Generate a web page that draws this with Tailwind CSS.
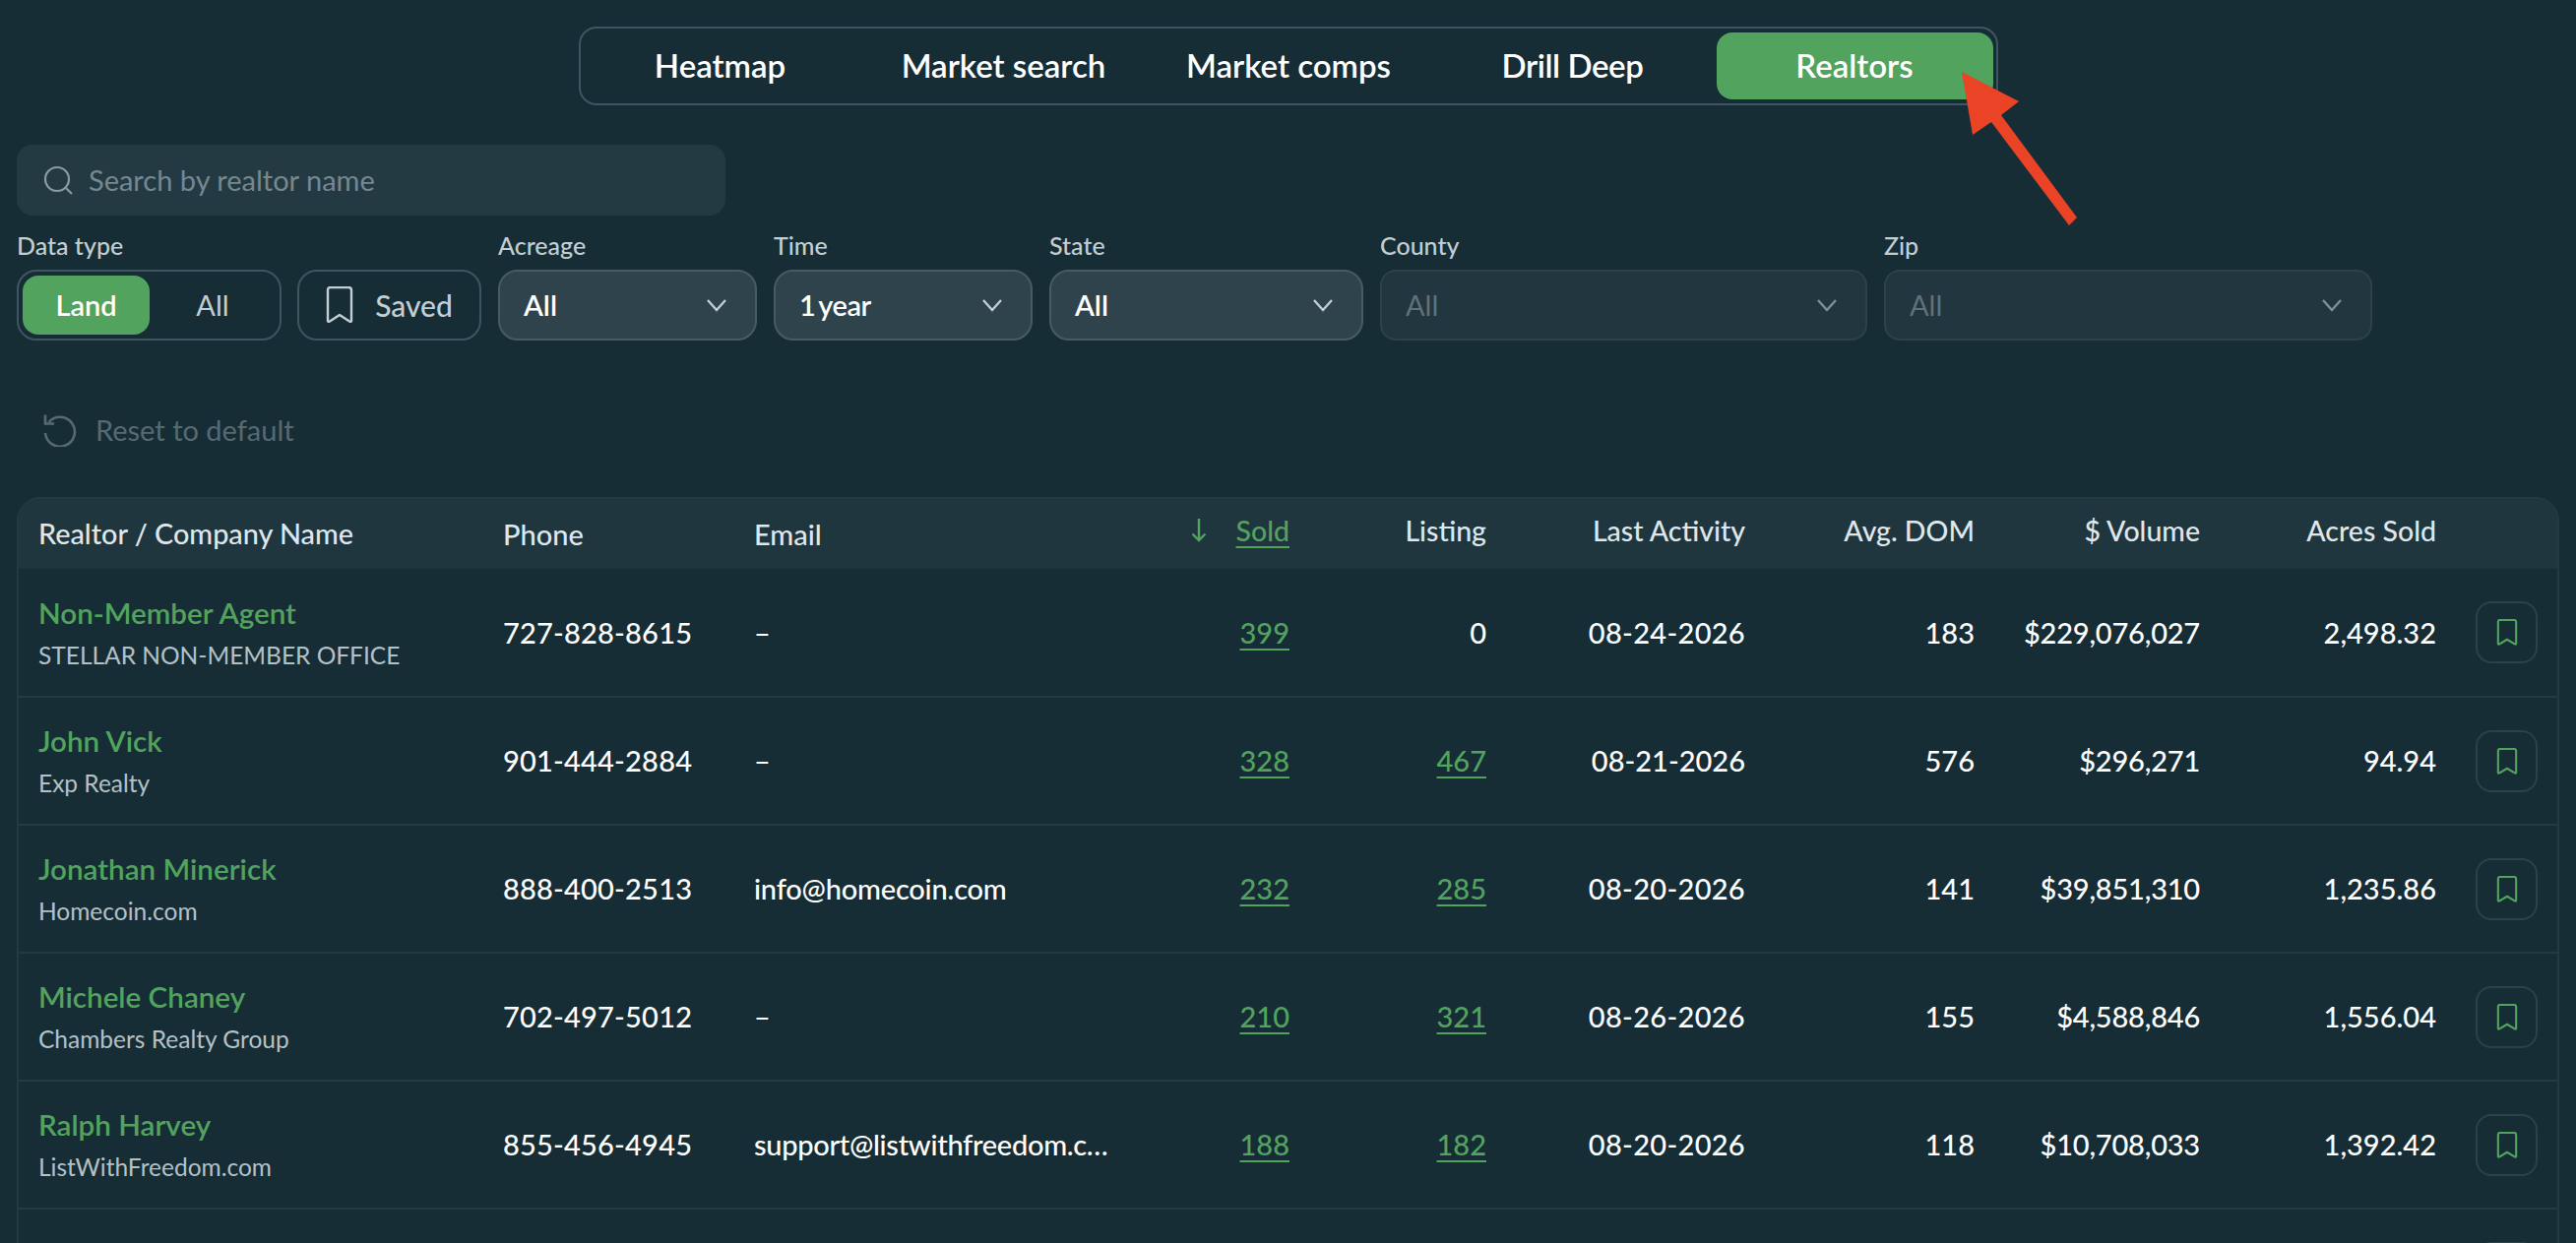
<!DOCTYPE html>
<html lang="en">
  <head>
    <meta charset="UTF-8" />
    <meta name="viewport" content="width=device-width, initial-scale=1.0" />
    <script src="https://cdn.jsdelivr.net/npm/@tailwindcss/browser@4"></script>
    <title>Realtors</title>
  </head>
  <body class="relative h-[1263px] overflow-hidden bg-[#172d36] font-['Lato',sans-serif] text-white">
    <!-- tabs -->
    <div class="flex justify-center pt-[27px]">
      <nav class="flex h-[80px] w-[1442px] items-center rounded-[18px] border-2 border-[#3f5560] pl-[1px] pr-[1px] text-[33px] font-semibold">
        <span class="flex h-[68px] w-[282px] items-center justify-center">Heatmap</span>
        <span class="flex h-[68px] w-[294px] items-center justify-center">Market search</span>
        <span class="flex h-[68px] w-[285px] items-center justify-center">Market comps</span>
        <span class="flex h-[68px] w-[292px] items-center justify-center tracking-[-0.4px]">Drill Deep</span>
        <span class="flex h-[68px] w-[281px] items-center justify-center rounded-[16px] bg-[#52a35e]">Realtors</span>
      </nav>
    </div>

    <!-- search -->
    <div class="ml-[17px] mt-[40px] flex h-[72px] w-[720px] items-center gap-[15px] rounded-[16px] bg-[#243a43] pl-[26px] text-[29px] text-[#75888f]">
      <svg class="h-[32px] w-[32px]" viewBox="0 0 32 32" fill="none" stroke="#8a9ba1" stroke-width="2.2"><circle cx="15" cy="15" r="12"/><path d="M24 24l6 6"/></svg>
      Search by realtor name
    </div>

    <!-- filters -->
    <div class="ml-[17px] mt-[18px] flex items-end gap-[17px]">
      <div class="flex flex-col gap-[13px]">
        <span class="text-[25px] leading-[24px] font-medium text-[#c3ced2]">Data type</span>
        <div class="flex h-[72px] w-[269px] items-center rounded-[20px] border-2 border-[#3f5560] pl-[4px] text-[29px]">
          <span class="flex h-[60px] w-[129px] items-center justify-center rounded-[16px] bg-[#52a35e] font-semibold">Land</span>
          <span class="flex w-[128px] justify-center text-[#c3ced2]">All</span>
        </div>
      </div>
      <div class="-ml-[1px] flex h-[72px] w-[187px] items-center justify-center gap-[22px] rounded-[20px] border-2 border-[#3f5560] text-[30px] font-medium text-[#c3ced2]">
        <svg class="h-[38px] w-[28px]" viewBox="0 0 28 38" fill="none" stroke="#c3ced2" stroke-width="2.4" stroke-linejoin="round"><path d="M2 4q0-3 3-3h18q3 0 3 3v31q0 1.500-2 .5l-10-6.500-10 6.500q-2 1-2-.5z"/></svg>
        Saved
      </div>
      <div class="flex flex-col gap-[13px]">
        <span class="text-[25px] leading-[24px] font-medium text-[#c3ced2]">Acreage</span>
        <div class="flex h-[72px] w-[263px] items-center justify-between rounded-[20px] border-2 border-[#465b64] bg-[#2e434b] pl-[24px] pr-[28px] text-[29px] font-semibold">
          All
          <svg class="h-[14px] w-[22px]" viewBox="0 0 22 14" fill="none" stroke="#c3ced2" stroke-width="2.400"><path d="M2 2l9 10 9-10"/></svg>
        </div>
      </div>
      <div class="flex flex-col gap-[13px]">
        <span class="text-[25px] leading-[24px] font-medium text-[#c3ced2]">Time</span>
        <div class="flex h-[72px] w-[263px] items-center justify-between rounded-[20px] border-2 border-[#465b64] bg-[#2e434b] pl-[24px] pr-[28px] text-[29px] font-semibold tracking-[-0.5px] [word-spacing:-3px]">
          1 year
          <svg class="h-[14px] w-[22px]" viewBox="0 0 22 14" fill="none" stroke="#c3ced2" stroke-width="2.400"><path d="M2 2l9 10 9-10"/></svg>
        </div>
      </div>
      <div class="flex flex-col gap-[13px]">
        <span class="text-[25px] leading-[24px] font-medium text-[#c3ced2]">State</span>
        <div class="flex h-[72px] w-[319px] items-center justify-between rounded-[20px] border-2 border-[#465b64] bg-[#2e434b] pl-[24px] pr-[28px] text-[29px] font-semibold">
          All
          <svg class="h-[14px] w-[22px]" viewBox="0 0 22 14" fill="none" stroke="#c3ced2" stroke-width="2.400"><path d="M2 2l9 10 9-10"/></svg>
        </div>
      </div>
      <div class="flex flex-col gap-[13px]">
        <span class="text-[25px] leading-[24px] font-medium text-[#c3ced2]">County</span>
        <div class="flex h-[72px] w-[495px] items-center justify-between rounded-[16px] border-2 border-[#2c424b] bg-[#21363f] pl-[24px] pr-[28px] text-[29px] text-[#5f727a]">
          All
          <svg class="h-[14px] w-[22px]" viewBox="0 0 22 14" fill="none" stroke="#7d9097" stroke-width="2.400"><path d="M2 2l9 10 9-10"/></svg>
        </div>
      </div>
      <div class="flex flex-col gap-[13px]">
        <span class="text-[25px] leading-[24px] font-medium text-[#c3ced2]">Zip</span>
        <div class="flex h-[72px] w-[496px] items-center justify-between rounded-[16px] border-2 border-[#2c424b] bg-[#21363f] pl-[24px] pr-[28px] text-[29px] text-[#5f727a]">
          All
          <svg class="h-[14px] w-[22px]" viewBox="0 0 22 14" fill="none" stroke="#7d9097" stroke-width="2.400"><path d="M2 2l9 10 9-10"/></svg>
        </div>
      </div>
    </div>

    <!-- reset -->
    <div class="ml-[44px] mt-[74px] flex h-[34px] items-center gap-[19px] text-[29px] text-[#566a72]">
      <svg class="h-[34px] w-[34px]" viewBox="0 0 34 34" fill="none" stroke="#566a72" stroke-width="2.600"><path d="M5.500 9A15 15 0 1 1 2 20"/><path d="M2 1.500v9h9"/></svg>
      Reset to default
    </div>

    <!-- table -->
    <div class="ml-[17px] mt-[51px] w-[2583px] rounded-t-[24px] border-2 border-b-0 border-[#233a43]">
      <table class="w-[2579px] table-fixed border-collapse text-[29px]">
        <colgroup>
          <col class="w-[472px]" /><col class="w-[255px]" /><col class="w-[396px]" /><col class="w-[188px]" /><col class="w-[200px]" /><col class="w-[263px]" /><col class="w-[233px]" /><col class="w-[229px]" /><col class="w-[240px]" /><col class="w-[103px]" />
        </colgroup>
        <thead class="bg-[#20363f] text-[#dfe7ec]">
          <tr class="h-[71px]">
            <th class="rounded-tl-[22px] px-[20px] text-left text-[28.8px] font-medium">Realtor / Company Name</th>
            <th class="px-[20px] text-left font-medium">Phone</th>
            <th class="px-[20px] text-left font-medium">Email</th>
            <th class="px-[20px] pb-[7px] text-right text-[28.5px] font-medium text-[#52a35e]">
              <span class="flex items-center justify-end gap-[30px]">
                <svg class="h-[24px] w-[16px]" viewBox="0 0 16 24" fill="none" stroke="#52a35e" stroke-width="2.400"><path d="M8 0v22M1.500 15.500L8 22l6.500-6.500"/></svg>
                <span class="underline underline-offset-[5px] decoration-2">Sold</span>
              </span>
            </th>
            <th class="px-[20px] pb-[7px] text-right text-[28.5px] font-medium">Listing</th>
            <th class="px-[20px] pb-[7px] text-right text-[28.5px] font-medium">Last Activity</th>
            <th class="px-[20px] pb-[7px] text-right text-[28.5px] font-medium">Avg. DOM</th>
            <th class="px-[20px] pb-[7px] text-right text-[28.5px] font-medium">$ Volume</th>
            <th class="px-[20px] pb-[7px] text-right text-[28.5px] font-medium">Acres Sold</th>
            <th class="rounded-tr-[22px]"></th>
          </tr>
        </thead>
        <tbody class="font-medium">
          <tr class="h-[130px] border-b-2 border-[#233a43]">
            <td class="px-[20px]"><div class="text-[29.6px] font-semibold leading-[38px] text-[#52a35e]">Non-Member Agent</div><div class="mt-[8px] text-[24.5px] font-normal leading-[32px] text-[#b4c1c6]">STELLAR NON-MEMBER OFFICE</div></td>
            <td class="px-[20px] tracking-[0.2px]">727-828-8615</td>
            <td class="px-[20px]">–</td>
            <td class="px-[20px] text-right text-[#52a35e]"><span class="underline underline-offset-[5px] decoration-2">399</span></td>
            <td class="px-[20px] text-right">0</td>
            <td class="px-[20px] text-right tracking-[0.3px]">08-24-2026</td>
            <td class="px-[20px] text-right">183</td>
            <td class="px-[20px] text-right tracking-[-0.2px]">$229,076,027</td>
            <td class="px-[20px] text-right">2,498.32</td>
            <td class="px-[20px]"><span class="flex h-[63px] w-[63px] items-center justify-center rounded-[16px] border-2 border-[#2c424b]"><svg class="h-[27px] w-[22px]" viewBox="0 0 22 28" fill="none" stroke="#52a35e" stroke-width="2.200" stroke-linejoin="round"><path d="M1.500 3q0-2 2-2h15q2 0 2 2v23q0 1-1.500.3l-8-4.800-8 4.800q-1.500.7-1.500-.3z"/></svg></span></td>
          </tr>
          <tr class="h-[130px] border-b-2 border-[#233a43]">
            <td class="px-[20px]"><div class="text-[29.6px] font-semibold leading-[38px] text-[#52a35e]">John Vick</div><div class="mt-[8px] text-[24.5px] font-normal leading-[32px] text-[#b4c1c6]">Exp Realty</div></td>
            <td class="px-[20px] tracking-[0.2px]">901-444-2884</td>
            <td class="px-[20px]">–</td>
            <td class="px-[20px] text-right text-[#52a35e]"><span class="underline underline-offset-[5px] decoration-2">328</span></td>
            <td class="px-[20px] text-right text-[#52a35e]"><span class="underline underline-offset-[5px] decoration-2">467</span></td>
            <td class="px-[20px] text-right">08-21-2026</td>
            <td class="px-[20px] text-right">576</td>
            <td class="px-[20px] text-right tracking-[-0.2px]">$296,271</td>
            <td class="px-[20px] text-right">94.94</td>
            <td class="px-[20px]"><span class="flex h-[63px] w-[63px] items-center justify-center rounded-[16px] border-2 border-[#2c424b]"><svg class="h-[27px] w-[22px]" viewBox="0 0 22 28" fill="none" stroke="#52a35e" stroke-width="2.200" stroke-linejoin="round"><path d="M1.500 3q0-2 2-2h15q2 0 2 2v23q0 1-1.500.3l-8-4.800-8 4.800q-1.500.7-1.500-.3z"/></svg></span></td>
          </tr>
          <tr class="h-[130px] border-b-2 border-[#233a43]">
            <td class="px-[20px]"><div class="text-[29.6px] font-semibold leading-[38px] text-[#52a35e]">Jonathan Minerick</div><div class="mt-[8px] text-[24.5px] font-normal leading-[32px] text-[#b4c1c6]">Homecoin.com</div></td>
            <td class="px-[20px] tracking-[0.2px]">888-400-2513</td>
            <td class="px-[20px] tracking-[-0.2px]">info@homecoin.com</td>
            <td class="px-[20px] text-right text-[#52a35e]"><span class="underline underline-offset-[5px] decoration-2">232</span></td>
            <td class="px-[20px] text-right text-[#52a35e]"><span class="underline underline-offset-[5px] decoration-2">285</span></td>
            <td class="px-[20px] text-right tracking-[0.3px]">08-20-2026</td>
            <td class="px-[20px] text-right">141</td>
            <td class="px-[20px] text-right tracking-[-0.2px]">$39,851,310</td>
            <td class="px-[20px] text-right">1,235.86</td>
            <td class="px-[20px]"><span class="flex h-[63px] w-[63px] items-center justify-center rounded-[16px] border-2 border-[#2c424b]"><svg class="h-[27px] w-[22px]" viewBox="0 0 22 28" fill="none" stroke="#52a35e" stroke-width="2.200" stroke-linejoin="round"><path d="M1.500 3q0-2 2-2h15q2 0 2 2v23q0 1-1.500.3l-8-4.800-8 4.800q-1.500.7-1.500-.3z"/></svg></span></td>
          </tr>
          <tr class="h-[130px] border-b-2 border-[#233a43]">
            <td class="px-[20px]"><div class="text-[29.6px] font-semibold leading-[38px] text-[#52a35e]">Michele Chaney</div><div class="mt-[8px] text-[24.5px] font-normal leading-[32px] text-[#b4c1c6]">Chambers Realty Group</div></td>
            <td class="px-[20px] tracking-[0.2px]">702-497-5012</td>
            <td class="px-[20px]">–</td>
            <td class="px-[20px] text-right text-[#52a35e]"><span class="underline underline-offset-[5px] decoration-2">210</span></td>
            <td class="px-[20px] text-right text-[#52a35e]"><span class="underline underline-offset-[5px] decoration-2">321</span></td>
            <td class="px-[20px] text-right tracking-[0.3px]">08-26-2026</td>
            <td class="px-[20px] text-right">155</td>
            <td class="px-[20px] text-right tracking-[-0.2px]">$4,588,846</td>
            <td class="px-[20px] text-right">1,556.04</td>
            <td class="px-[20px]"><span class="flex h-[63px] w-[63px] items-center justify-center rounded-[16px] border-2 border-[#2c424b]"><svg class="h-[27px] w-[22px]" viewBox="0 0 22 28" fill="none" stroke="#52a35e" stroke-width="2.200" stroke-linejoin="round"><path d="M1.500 3q0-2 2-2h15q2 0 2 2v23q0 1-1.500.3l-8-4.800-8 4.800q-1.500.7-1.500-.3z"/></svg></span></td>
          </tr>
          <tr class="h-[130px] border-b-2 border-[#233a43]">
            <td class="px-[20px]"><div class="text-[29.6px] font-semibold leading-[38px] text-[#52a35e]">Ralph Harvey</div><div class="mt-[8px] text-[24.5px] font-normal leading-[32px] text-[#b4c1c6]">ListWithFreedom.com</div></td>
            <td class="px-[20px] tracking-[0.2px]">855-456-4945</td>
            <td class="pl-[20px] pr-[16px] tracking-[-0.3px]"><div class="truncate">support@listwithfreedom.com</div></td>
            <td class="px-[20px] text-right text-[#52a35e]"><span class="underline underline-offset-[5px] decoration-2">188</span></td>
            <td class="px-[20px] text-right text-[#52a35e]"><span class="underline underline-offset-[5px] decoration-2">182</span></td>
            <td class="px-[20px] text-right tracking-[0.3px]">08-20-2026</td>
            <td class="px-[20px] text-right">118</td>
            <td class="px-[20px] text-right tracking-[-0.2px]">$10,708,033</td>
            <td class="px-[20px] text-right">1,392.42</td>
            <td class="px-[20px]"><span class="flex h-[63px] w-[63px] items-center justify-center rounded-[16px] border-2 border-[#2c424b]"><svg class="h-[27px] w-[22px]" viewBox="0 0 22 28" fill="none" stroke="#52a35e" stroke-width="2.200" stroke-linejoin="round"><path d="M1.500 3q0-2 2-2h15q2 0 2 2v23q0 1-1.500.3l-8-4.800-8 4.800q-1.500.7-1.500-.3z"/></svg></span></td>
          </tr>
          <tr class="h-[130px]">
            <td class="px-[20px]"></td><td colspan="8"></td>
            <td class="px-[20px]"><span class="flex h-[63px] w-[63px] items-center justify-center rounded-[16px] border-2 border-[#2c424b]"></span></td>
          </tr>
        </tbody>
      </table>
    </div>

    <!-- annotation arrow -->
    <svg class="absolute left-0 top-0 h-[260px] w-[2200px]" viewBox="0 0 2200 260">
      <path fill="#ea4325" d="M1993 73L2051 103L2033 117L2110 221L2102 229L2023 124L2004 137Z"/>
    </svg>
  </body>
</html>
